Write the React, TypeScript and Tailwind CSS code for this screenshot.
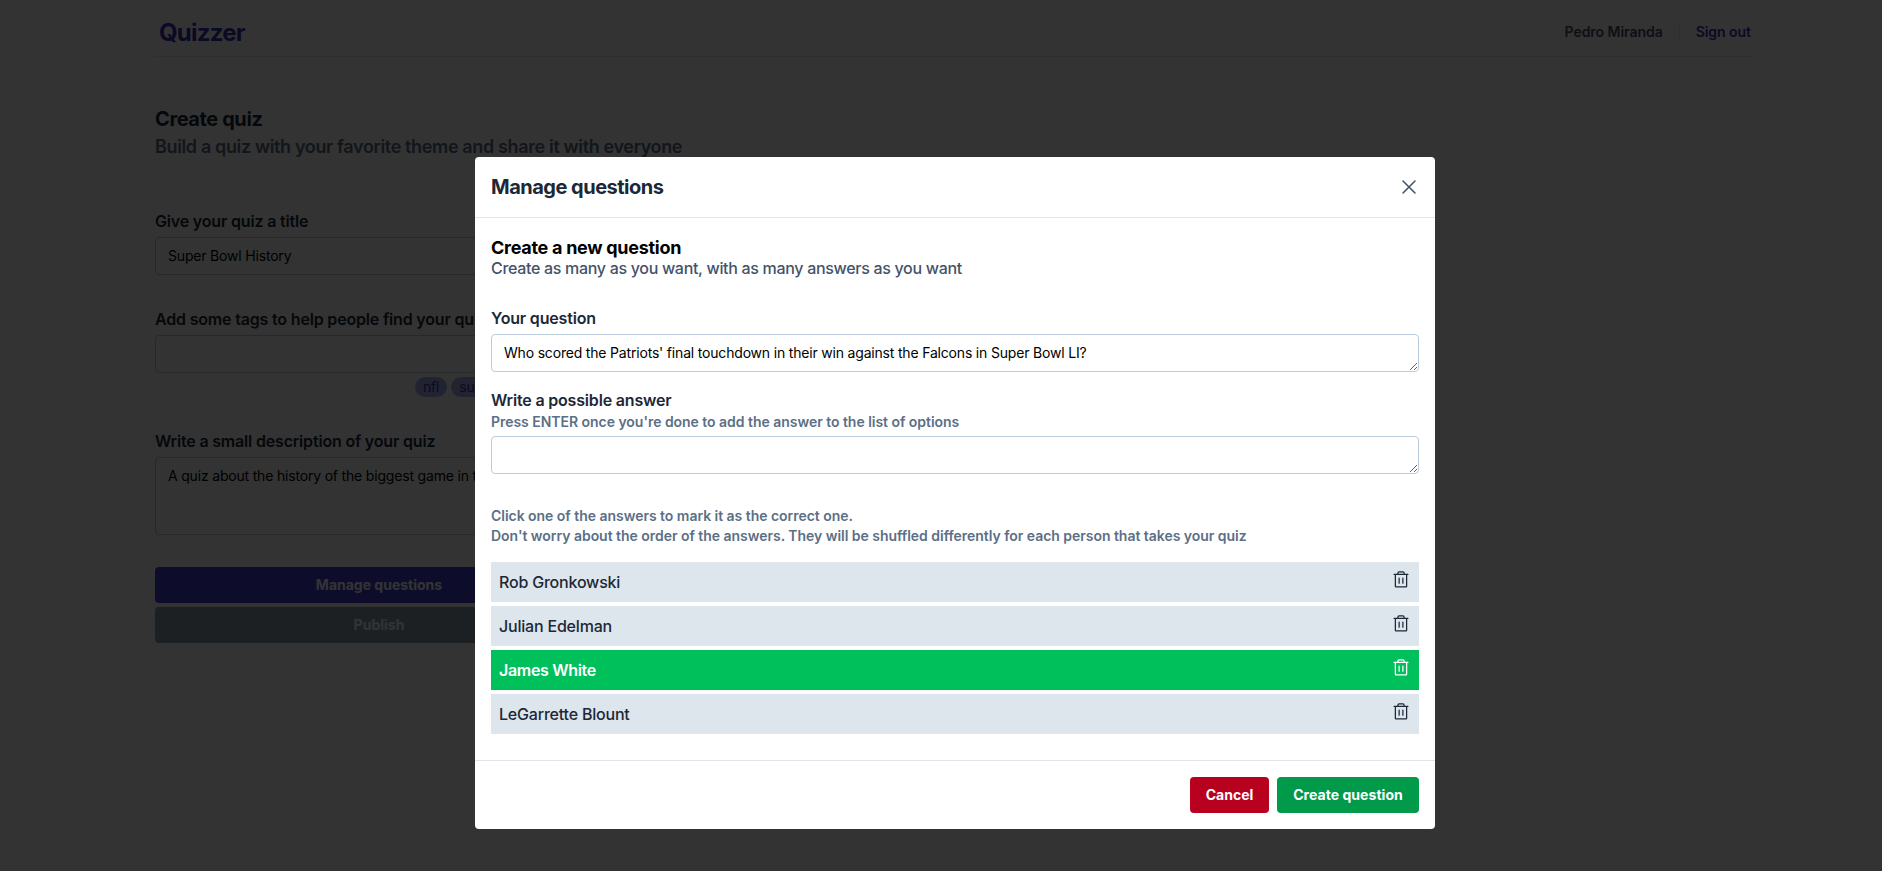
import { HiOutlineXMark } from "react-icons/hi2";
import { PiTrash } from "react-icons/pi";

const label = "text-base leading-5 font-semibold tracking-[-0.18px] text-[#1c2836]";
const field =
  "block w-full rounded border border-[#bccbdb] bg-white px-3 py-2 text-sm leading-5 tracking-[-0.185px] text-black outline-none";

const answers = [
  { name: "Rob Gronkowski", correct: false },
  { name: "Julian Edelman", correct: false },
  { name: "James White", correct: true },
  { name: "LeGarrette Blount", correct: false },
];

function Header() {
  return (
    <header className="flex h-[57px] items-center justify-between border-b border-gray-200 pt-2 pr-1 pl-1">
      <span className="pt-0.5 text-2xl font-bold tracking-[-0.77px] text-[#3a33b4]">Quizzer</span>
      <div className="flex items-center text-sm font-semibold tracking-[-0.04px]">
        <span className="text-[#43536a]">Pedro Miranda</span>
        <span className="mx-4 h-5 w-px bg-gray-200" />
        <span className="text-[#3a33b4]">Sign out</span>
      </div>
    </header>
  );
}

function QuizForm() {
  return (
    <main className="pt-[50px]">
      <h1 className="text-xl leading-6 font-bold tracking-[-0.4px] text-[#1c2836]">Create quiz</h1>
      <h2 className="mt-1 text-lg leading-6 font-semibold tracking-[-0.36px] text-[#5b6f86]">
        Build a quiz with your favorite theme and share it with everyone
      </h2>
      <form className="mt-[52px] flex w-[448px] flex-col">
        <label className={label}>Give your quiz a title</label>
        <input readOnly className={`${field} mt-1.5`} value="Super Bowl History" />

        <label className={`${label} mt-[34px]`}>Add some tags to help people find your quiz</label>
        <input readOnly className={`${field} mt-1.5`} value="" />
        <div className="mt-1 flex justify-end gap-1 text-sm leading-5 tracking-[-0.185px] text-[#3730a3]">
          <span className="rounded-full bg-[#a5b0f5] px-2">nfl</span>
          <span className="rounded-full bg-[#a5b0f5] px-2">superbowl</span>
          <span className="rounded-full bg-[#a5b0f5] px-2">football</span>
        </div>

        <label className={`${label} mt-[34px]`}>Write a small description of your quiz</label>
        <textarea
          readOnly
          className={`${field} mt-1.5 h-[78px] resize-none`}
          value="A quiz about the history of the biggest game in the world"
        />

        <button type="button" className="mt-8 h-9 rounded bg-[#4442d8] text-sm font-bold text-white">
          Manage questions
        </button>
        <button type="button" className="mt-1 h-9 rounded bg-[#8f9fb0] text-sm font-bold text-white">
          Publish
        </button>
      </form>
    </main>
  );
}

function QuestionsDialog() {
  return (
    <div className="flex h-[672px] w-[960px] flex-col rounded bg-white">
      <div className="flex h-[61px] shrink-0 items-center justify-between border-b border-[#dde5ed] px-4">
        <h2 className="text-xl font-bold tracking-tight text-[#1c2836]">Manage questions</h2>
        <HiOutlineXMark className="-mr-0.5 size-6 text-[#405068]" />
      </div>

      <div className="flex flex-col px-4 pt-5">
        <h3 className="text-lg leading-5 font-bold tracking-[-0.28px] text-black">Create a new question</h3>
        <p className="text-base leading-5 font-medium tracking-[-0.31px] text-[#43536a]">
          Create as many as you want, with as many answers as you want
        </p>

        <label className={`${label} mt-[30px]`}>Your question</label>
        <textarea
          readOnly
          className={`${field} mt-1.5 h-[38px]`}
          value="Who scored the Patriots' final touchdown in their win against the Falcons in Super Bowl LI?"
        />

        <label className={`${label} mt-[18px]`}>Write a possible answer</label>
        <p className="mt-0.5 text-sm leading-5 font-semibold tracking-[-0.034px] text-[#5b6f86]">
          Press ENTER once you're done to add the answer to the list of options
        </p>
        <textarea readOnly className={`${field} mt-1 h-[38px]`} value="" />

        <p className="mt-8 text-sm leading-5 font-semibold tracking-[-0.034px] text-[#5b6f86]">
          Click one of the answers to mark it as the correct one.
          <br />
          Don't worry about the order of the answers. They will be shuffled differently for each person that
          takes your quiz
        </p>

        <ul className="mt-4 flex flex-col gap-1">
          {answers.map((a) => (
            <li
              key={a.name}
              className={`flex h-10 justify-between px-2 py-2 ${
                a.correct
                  ? "bg-[#00c05c] font-semibold tracking-[-0.33px] text-white"
                  : "bg-[#dde5ed] font-medium tracking-[-0.2px] text-[#1c2836]"
              }`}
            >
              <span className="text-base leading-6">{a.name}</span>
              <PiTrash className="size-5" />
            </li>
          ))}
        </ul>
      </div>

      <div className="mt-auto flex justify-end gap-2 border-t border-[#e2e2ea] p-4">
        <button type="button" className="h-9 w-[79px] rounded bg-[#b8001f] text-sm font-bold text-white">
          Cancel
        </button>
        <button
          type="button"
          className="h-9 w-[142px] rounded bg-[#009a4a] text-sm font-bold tracking-[0.05px] text-white"
        >
          Create question
        </button>
      </div>
    </div>
  );
}

export default function App() {
  return (
    <div className="relative h-[871px] w-full overflow-hidden bg-white font-[Inter,sans-serif]">
      <div className="w-[1910px] px-[155px]">
        <Header />
        <QuizForm />
      </div>
      <div className="absolute top-0 left-0 flex h-[871px] w-[1910px] items-start justify-center bg-black/80 pt-[157px]">
        <QuestionsDialog />
      </div>
    </div>
  );
}
